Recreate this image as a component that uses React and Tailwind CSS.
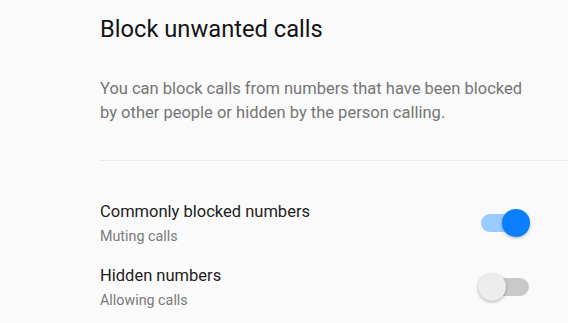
import { useState } from "react";

function Toggle({ on, onChange }) {
  return (
    <button
      type="button"
      onClick={onChange}
      className="relative h-[18px] w-[48px] shrink-0"
    >
      <span
        className={`absolute inset-0 rounded-full ${
          on ? "bg-[#99cbff]" : "bg-[#c9c9c9]"
        }`}
      />
      <span
        className={`absolute top-[-5px] h-[28px] w-[28px] rounded-full shadow-[0_1px_3px_rgba(0,0,0,0.3)] ${
          on ? "left-[21px] bg-[#0a7fff]" : "left-[-3px] bg-[#ececec]"
        }`}
      />
    </button>
  );
}

function SettingRow({ title, subtitle, on, onChange }) {
  return (
    <div className="flex items-center justify-between pr-[39px]">
      <div>
        <div className="text-[16.5px] leading-[24px] text-[#212121]">{title}</div>
        <div className="mt-[2px] text-[14.3px] leading-[20px] text-[#7a7a7a]">{subtitle}</div>
      </div>
      <Toggle on={on} onChange={onChange} />
    </div>
  );
}

export default function App() {
  const [common, setCommon] = useState(true);
  const [hidden, setHidden] = useState(false);

  return (
    <div
      className="h-[323px] w-[568px] overflow-hidden bg-[#fafafa] pl-[100px]"
      style={{ fontFamily: "Roboto, 'Noto Sans', sans-serif" }}
    >
      <h1 className="pt-[15px] text-[23.7px] leading-[28px] text-[#141414]">
        Block unwanted calls
      </h1>
      <p className="mt-[34px] pr-[30px] text-[16.5px] leading-[24px] text-[#757575]">
        You can block calls from numbers that have been blocked by other people or hidden by
        the person calling.
      </p>
      <div className="mt-[35px] h-px bg-[#ebebeb]" />
      <div className="mt-[39px] flex flex-col gap-[18px]">
        <SettingRow
          title="Commonly blocked numbers"
          subtitle={common ? "Muting calls" : "Allowing calls"}
          on={common}
          onChange={() => setCommon(!common)}
        />
        <SettingRow
          title="Hidden numbers"
          subtitle={hidden ? "Muting calls" : "Allowing calls"}
          on={hidden}
          onChange={() => setHidden(!hidden)}
        />
      </div>
    </div>
  );
}
